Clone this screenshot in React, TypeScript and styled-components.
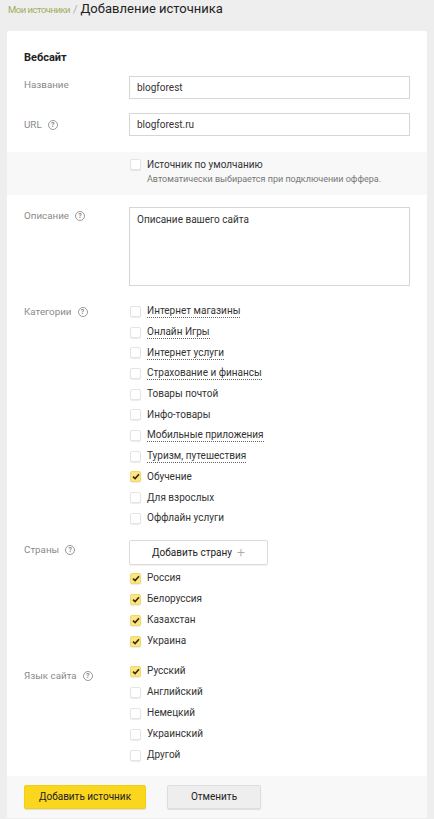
import React from "react";
import styled, { createGlobalStyle } from "styled-components";

const GlobalStyle = createGlobalStyle`
  html, body {
    margin: 0;
    padding: 0;
    background: #eeeeee;
  }
  body {
    font-family: Roboto, "Noto Sans", Arial, sans-serif;
    color: #333333;
  }
`;

const Page = styled.div`
  width: 434px;
  min-height: 819px;
  background: #eeeeee;
`;

const Header = styled.div`
  height: 30px;
  padding: 1px 8px 0;
  display: flex;
  align-items: flex-start;
  gap: 3px;
`;

const Crumb = styled.span`
  font-size: 9.5px;
  line-height: 16px;
  color: #9fae5d;
  letter-spacing: -0.5px;
  padding-top: 1px;
`;

const Slash = styled.span`
  font-size: 11px;
  line-height: 16px;
  color: #b0b0b0;
  padding-top: 1px;
`;

const Title = styled.h1`
  margin: 0;
  font-size: 13px;
  line-height: 16px;
  font-weight: 400;
  color: #222222;
`;

const Card = styled.div`
  margin: 0 7px;
  background: #ffffff;
  border-radius: 2px;
  padding-top: 19px;
  overflow: hidden;
`;

const Section = styled.div`
  padding: 0 17px;
`;

const SectionTitle = styled.div`
  font-size: 11px;
  line-height: 16px;
  font-weight: 700;
  color: #222222;
  margin-bottom: 10px;
`;

const Row = styled.div<{ $mt?: number }>`
  display: grid;
  grid-template-columns: 105px 281px;
  align-items: start;
  margin-top: ${(p) => p.$mt ?? 0}px;
`;

const Label = styled.div<{ $pt?: number }>`
  font-size: 9.8px;
  line-height: 16px;
  color: #8a8a8a;
  padding-top: ${(p) => p.$pt ?? 0}px;
  display: flex;
  align-items: center;
  gap: 6px;
`;

const Help = styled.span`
  width: 8px;
  height: 8px;
  border: 1px solid #999999;
  border-radius: 50%;
  font-size: 7px;
  line-height: 8px;
  text-align: center;
  color: #888888;
  font-weight: 700;
`;

const Input = styled.div`
  height: 23px;
  box-sizing: border-box;
  border: 1px solid #d6d6d6;
  padding: 0 7px;
  font-size: 10px;
  line-height: 21px;
  color: #333333;
`;

const TextArea = styled.div`
  height: 79px;
  box-sizing: border-box;
  border: 1px solid #d6d6d6;
  padding: 4px 7px;
  font-size: 10px;
  line-height: 16px;
  color: #333333;
`;

const Band = styled.div<{ $mt?: number }>`
  margin-top: ${(p) => p.$mt ?? 0}px;
  background: #f8f8f8;
  padding: 4px 17px 9px 122px;
`;

const Hint = styled.div`
  font-size: 9px;
  line-height: 14px;
  color: #777777;
  padding-left: 18px;
`;

const List = styled.div<{ $mt?: number; $h: number }>`
  display: flex;
  flex-direction: column;
  margin-top: ${(p) => p.$mt ?? 0}px;
  & > * {
    height: ${(p) => p.$h}px;
  }
`;

const CheckRow = styled.label`
  display: flex;
  align-items: center;
  gap: 6px;
  font-size: 10px;
  color: #333333;
`;

const Box = styled.span<{ $on?: boolean }>`
  width: 11px;
  height: 11px;
  margin-left: 1px;
  box-sizing: border-box;
  border-radius: 2px;
  border: 1px solid ${(p) => (p.$on ? "#f0d96a" : "#e4e4e4")};
  background: ${(p) => (p.$on ? "#fbe584" : "#ffffff")};
  box-shadow: 0 1px 1px rgba(0, 0, 0, 0.08);
  display: flex;
  align-items: center;
  justify-content: center;
  flex-shrink: 0;
`;

const ItemText = styled.span<{ $dotted?: boolean }>`
  line-height: 13px;
  border-bottom: 1px ${(p) => (p.$dotted ? "dotted #666666" : "solid transparent")};
`;

const AddButton = styled.div`
  width: 139px;
  height: 25px;
  box-sizing: border-box;
  border: 1px solid #dcdcdc;
  border-radius: 2px;
  box-shadow: 0 1px 1px rgba(0, 0, 0, 0.06);
  display: flex;
  align-items: center;
  justify-content: center;
  gap: 5px;
  font-size: 10px;
  color: #222222;
`;

const Plus = styled.span`
  font-size: 14px;
  line-height: 14px;
  color: #aaaaaa;
  font-weight: 300;
`;

const Footer = styled.div`
  margin-top: 10px;
  background: #f8f8f8;
  padding: 9px 17px 9px;
  display: flex;
  gap: 21px;
`;

const Button = styled.div<{ $primary?: boolean; $w: number }>`
  width: ${(p) => p.$w}px;
  height: 24px;
  box-sizing: border-box;
  border-radius: 2px;
  display: flex;
  align-items: center;
  justify-content: center;
  font-size: 10px;
  color: #222222;
  background: ${(p) => (p.$primary ? "#fad61e" : "#eeeeee")};
  border: 1px solid ${(p) => (p.$primary ? "#f2cf17" : "#dddddd")};
  box-shadow: 0 1px 1px rgba(0, 0, 0, 0.1);
`;

function Check({ on }: { on?: boolean }) {
  return (
    <Box $on={on}>
      {on && (
        <svg width="8" height="7" viewBox="0 0 8 7">
          <path d="M1 3.6 L3.1 5.6 L7 1.2" fill="none" stroke="#3a2a00" strokeWidth="1.6" />
        </svg>
      )}
    </Box>
  );
}

type Item = { text: string; on?: boolean; dotted?: boolean };

const categories: Item[] = [
  { text: "Интернет магазины", dotted: true },
  { text: "Онлайн Игры", dotted: true },
  { text: "Интернет услуги", dotted: true },
  { text: "Страхование и финансы", dotted: true },
  { text: "Товары почтой" },
  { text: "Инфо-товары" },
  { text: "Мобильные приложения", dotted: true },
  { text: "Туризм, путешествия", dotted: true },
  { text: "Обучение", on: true },
  { text: "Для взрослых" },
  { text: "Оффлайн услуги" },
];

const countries: Item[] = [
  { text: "Россия", on: true },
  { text: "Белоруссия", on: true },
  { text: "Казахстан", on: true },
  { text: "Украина", on: true },
];

const languages: Item[] = [
  { text: "Русский", on: true },
  { text: "Английский" },
  { text: "Немецкий" },
  { text: "Украинский" },
  { text: "Другой" },
];

function CheckList({ items, mt, h }: { items: Item[]; mt?: number; h: number }) {
  return (
    <List $mt={mt} $h={h}>
      {items.map((it) => (
        <CheckRow key={it.text}>
          <Check on={it.on} />
          <ItemText $dotted={it.dotted}>{it.text}</ItemText>
        </CheckRow>
      ))}
    </List>
  );
}

export default function App() {
  return (
    <Page>
      <GlobalStyle />
      <Header>
        <Crumb>Мои источники</Crumb>
        <Slash>/</Slash>
        <Title>Добавление источника</Title>
      </Header>
      <Card>
        <Section>
          <SectionTitle>Вебсайт</SectionTitle>
          <Row>
            <Label $pt={1}>Название</Label>
            <Input>blogforest</Input>
          </Row>
          <Row $mt={14}>
            <Label $pt={4}>
              URL <Help>?</Help>
            </Label>
            <Input>blogforest.ru</Input>
          </Row>
        </Section>
        <Band $mt={16}>
          <CheckRow style={{ height: 16 }}>
            <Check />
            <span>Источник по умолчанию</span>
          </CheckRow>
          <Hint>Автоматически выбирается при подключении оффера.</Hint>
        </Band>
        <Section>
          <Row $mt={12}>
            <Label $pt={1}>
              Описание <Help>?</Help>
            </Label>
            <TextArea>Описание вашего сайта</TextArea>
          </Row>
          <Row $mt={15}>
            <Label $pt={3}>
              Категории <Help>?</Help>
            </Label>
            <CheckList items={categories} h={20.7} />
          </Row>
          <Row $mt={11}>
            <Label $pt={2}>
              Страны <Help>?</Help>
            </Label>
            <div>
              <AddButton>
                Добавить страну <Plus>+</Plus>
              </AddButton>
              <CheckList items={countries} mt={3} h={21} />
            </div>
          </Row>
          <Row $mt={9}>
            <Label $pt={7}>
              Язык сайта <Help>?</Help>
            </Label>
            <CheckList items={languages} h={21} />
          </Row>
        </Section>
        <Footer>
          <Button $primary $w={122}>
            Добавить источник
          </Button>
          <Button $w={94}>Отменить</Button>
        </Footer>
      </Card>
    </Page>
  );
}
